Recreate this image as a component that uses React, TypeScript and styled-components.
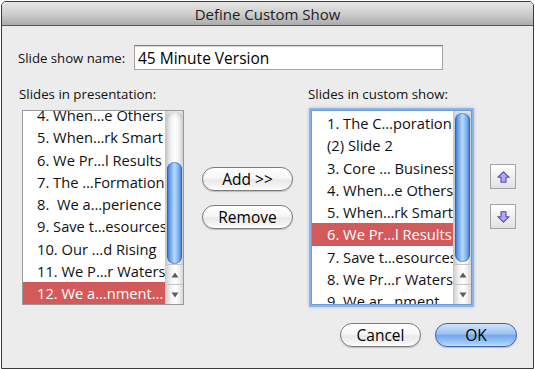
import styled, { createGlobalStyle } from 'styled-components';

const GlobalStyle = createGlobalStyle`
  html, body {
    margin: 0;
    padding: 0;
    background: #ffffff;
  }
  body {
    font-family: "Open Sans", "Liberation Sans", sans-serif;
    color: #000;
  }
`;

const presentationSlides = [
  '4. When…e Others',
  '5. When…rk Smart',
  '6. We Pr…l Results',
  '7. The …Formation',
  '8.  We a…perience',
  '9. Save t…esources',
  '10. Our …d Rising',
  '11. We P…r Waters',
  '12. We a…nment…',
];

const customSlides = [
  '1. The C…poration',
  '(2) Slide 2',
  '3. Core … Business',
  '4. When…e Others',
  '5. When…rk Smart',
  '6. We Pr…l Results',
  '7. Save t…esources',
  '8. We Pr…r Waters',
  '9. We ar…nment…',
];

type SlideListProps = {
  items: string[];
  selected: number;
  offset: number;
  thumbTop: number;
  thumbHeight: number;
  focused?: boolean;
  width: number;
  indent: number;
};

const SlideList = ({ items, selected, offset, thumbTop, thumbHeight, focused, width, indent }: SlideListProps) => (
  <ListBox $focused={focused} $width={width}>
    <Items>
      <ItemsInner $offset={offset}>
        {items.map((item, index) => (
          <Row key={index} $selected={index === selected} $indent={indent}>
            {item}
          </Row>
        ))}
      </ItemsInner>
    </Items>
    <Scrollbar>
      <Track $thumbTop={thumbTop}>
        <Thumb $height={thumbHeight} />
      </Track>
      <ScrollArrow>
        <svg width="8" height="6" viewBox="0 0 8 6">
          <path d="M4 0.5 L7.5 5.5 L0.5 5.5 Z" fill="#5e5e5e" />
        </svg>
      </ScrollArrow>
      <ScrollArrow>
        <svg width="8" height="6" viewBox="0 0 8 6">
          <path d="M0.5 0.5 L7.5 0.5 L4 5.5 Z" fill="#5e5e5e" />
        </svg>
      </ScrollArrow>
    </Scrollbar>
  </ListBox>
);

const MoveIcon = ({ down }: { down?: boolean }) => (
  <svg width="13" height="12" viewBox="0 0 13 12" style={down ? { transform: 'rotate(180deg)' } : undefined}>
    <path
      d="M6.5 0.8 L12.2 6.3 L9 6.3 L9 11.2 L4 11.2 L4 6.3 L0.8 6.3 Z"
      fill="#b5a6f2"
      stroke="#5b48b8"
      strokeWidth="1.1"
      strokeLinejoin="round"
    />
  </svg>
);

const App = () => {
  return (
    <Page>
      <GlobalStyle />
      <Window>
        <TitleBar>Define Custom Show</TitleBar>
        <Body>
          <NameRow>
            <NameLabel>Slide show name:</NameLabel>
            <NameInput defaultValue="45 Minute Version" />
          </NameRow>
          <Columns>
            <ListColumn>
              <ColumnLabel $shift={1}>Slides in presentation:</ColumnLabel>
              <ListSlot $shift={4}>
                <SlideList
                  items={presentationSlides}
                  selected={8}
                  offset={-7}
                  thumbTop={51}
                  thumbHeight={102}
                  width={162}
                  indent={14}
                />
              </ListSlot>
            </ListColumn>
            <MiddleColumn>
              <PushButton $width={91}>Add &gt;&gt;</PushButton>
              <PushButton $width={91}>Remove</PushButton>
            </MiddleColumn>
            <ListColumn $gap={15}>
              <ColumnLabel>Slides in custom show:</ColumnLabel>
              <ListSlot $shift={3}>
                <SlideList
                  items={customSlides}
                  selected={5}
                  offset={1}
                  thumbTop={2}
                  thumbHeight={149}
                  width={161}
                  indent={15}
                  focused
                />
              </ListSlot>
            </ListColumn>
            <ArrowColumn>
              <SquareButton>
                <MoveIcon />
              </SquareButton>
              <SquareButton>
                <MoveIcon down />
              </SquareButton>
            </ArrowColumn>
          </Columns>
          <Footer>
            <PushButton $width={81}>Cancel</PushButton>
            <PushButton $width={82} $default>
              OK
            </PushButton>
          </Footer>
        </Body>
      </Window>
    </Page>
  );
};

export default App;

const Page = styled.div`
  padding: 1px 0 0 1px;
`;
const Window = styled.div`
  box-sizing: border-box;
  width: 533px;
  height: 368px;
  border: 1px solid #3a3a3a;
  border-radius: 5px 5px 0 0;
  background: #ececec;
  display: flex;
  flex-direction: column;
  overflow: hidden;
`;
const TitleBar = styled.div`
  height: 23px;
  border-bottom: 1px solid #555;
  background: linear-gradient(#e6e6e6, #cfcfcf 50%, #ababab);
  text-align: center;
  font-size: 15px;
  line-height: 24px;
  color: #1e1e1e;
`;
const Body = styled.div`
  flex: 1;
  display: flex;
  flex-direction: column;
  padding: 19px 16px 0 16px;
`;
const NameRow = styled.div`
  display: flex;
  align-items: center;
  height: 25px;
`;
const NameLabel = styled.span`
  width: 116px;
  font-size: 13.2px;
  color: #111;
`;
const NameInput = styled.input`
  box-sizing: border-box;
  width: 309px;
  height: 25px;
  margin: 0;
  padding: 0 3px;
  border: 1px solid #a4a4a4;
  border-top-color: #7e7e7e;
  box-shadow: inset 0 1px 1px rgba(0, 0, 0, 0.18);
  background: #fff;
  font-family: "Open Sans", "Liberation Sans", sans-serif;
  font-size: 15.5px;
  color: #000;
  outline: none;
`;
const Columns = styled.div`
  display: flex;
  align-items: flex-start;
  margin-top: 16px;
`;
const ListColumn = styled.div<{ $gap?: number }>`
  display: flex;
  flex-direction: column;
  margin-left: ${({ $gap }) => $gap ?? 0}px;
`;
const ColumnLabel = styled.span<{ $shift?: number }>`
  height: 16px;
  line-height: 16px;
  margin-left: ${({ $shift }) => $shift ?? 0}px;
  font-size: 13.3px;
  color: #111;
  white-space: nowrap;
`;
const ListSlot = styled.div<{ $shift: number }>`
  margin-top: 8px;
  margin-left: ${({ $shift }) => $shift}px;
`;
const ListBox = styled.div<{ $focused?: boolean; $width: number }>`
  box-sizing: border-box;
  width: ${({ $width }) => $width}px;
  height: 195px;
  display: flex;
  background: #fff;
  border: 1px solid ${({ $focused }) => ($focused ? '#6e9ad8' : '#9a9a9a')};
  box-shadow: ${({ $focused }) =>
    $focused ? '0 0 0 2px rgba(125, 168, 226, 0.75), 0 0 3px 2px rgba(110, 155, 220, 0.5)' : 'none'};
`;
const Items = styled.div`
  flex: 1;
  overflow: hidden;
`;
const ItemsInner = styled.div<{ $offset: number }>`
  margin-top: ${({ $offset }) => $offset}px;
`;
const Row = styled.div<{ $selected: boolean; $indent: number }>`
  height: 22.3px;
  line-height: 22.3px;
  padding-left: ${({ $indent }) => $indent}px;
  font-size: 14.7px;
  white-space: pre;
  color: ${({ $selected }) => ($selected ? '#ffffff' : '#111111')};
  background: ${({ $selected }) => ($selected ? '#d35a5a' : 'transparent')};
`;
const Scrollbar = styled.div`
  width: 17px;
  display: flex;
  flex-direction: column;
  background: linear-gradient(to right, #d2d2d2, #f3f3f3 30%, #ffffff 55%, #ededed 80%, #d6d6d6);
  border-left: 1px solid #c9c9c9;
`;
const Track = styled.div<{ $thumbTop: number }>`
  flex: 1;
  box-sizing: border-box;
  padding-top: ${({ $thumbTop }) => $thumbTop}px;
  border-radius: 8px 8px 0 0;
  box-shadow: inset 0 3px 4px rgba(0, 0, 0, 0.12);
`;
const Thumb = styled.div<{ $height: number }>`
  height: ${({ $height }) => $height}px;
  margin: 0 1px;
  border-radius: 8px;
  background: linear-gradient(to right, #2f6fcf, #6ea6ee 22%, #b9d8fb 50%, #78afef 78%, #3574d2);
  box-shadow: inset 0 0 0 1px rgba(30, 80, 170, 0.45);
`;
const ScrollArrow = styled.div`
  height: 20px;
  display: flex;
  align-items: center;
  justify-content: center;
  border-top: 1px solid #c4c4c4;
  box-sizing: border-box;
`;
const MiddleColumn = styled.div`
  display: flex;
  flex-direction: column;
  gap: 14px;
  margin-left: 18px;
  padding-top: 81px;
`;
const PushButton = styled.button<{ $width: number; $default?: boolean }>`
  box-sizing: border-box;
  width: ${({ $width }) => $width}px;
  height: 24px;
  margin: 0;
  padding: 0;
  border-radius: 12px;
  border: 1px solid ${({ $default }) => ($default ? '#3f62a8' : '#7c7c7c')};
  background: ${({ $default }) =>
    $default
      ? 'linear-gradient(#d2e4fb, #9cc2f2 45%, #72a8ee 52%, #9cc8f8 85%, #c4e0fd)'
      : 'linear-gradient(#ffffff, #f7f7f7 45%, #e9e9e9 55%, #f4f4f4 85%, #ffffff)'};
  box-shadow: 0 1px 1px rgba(0, 0, 0, 0.2);
  font-family: "Open Sans", "Liberation Sans", sans-serif;
  font-size: 15.5px;
  line-height: 22px;
  color: #000;
`;
const ArrowColumn = styled.div`
  display: flex;
  flex-direction: column;
  gap: 15px;
  margin-left: 18px;
  padding-top: 78px;
`;
const SquareButton = styled.button`
  box-sizing: border-box;
  width: 26px;
  height: 25px;
  margin: 0;
  padding: 0;
  display: flex;
  align-items: center;
  justify-content: center;
  border: 1px solid #a3a3a3;
  background: linear-gradient(#ffffff, #eeeeee 55%, #e2e2e2);
`;
const Footer = styled.div`
  display: flex;
  justify-content: flex-end;
  gap: 14px;
  margin-top: 18px;
`;
